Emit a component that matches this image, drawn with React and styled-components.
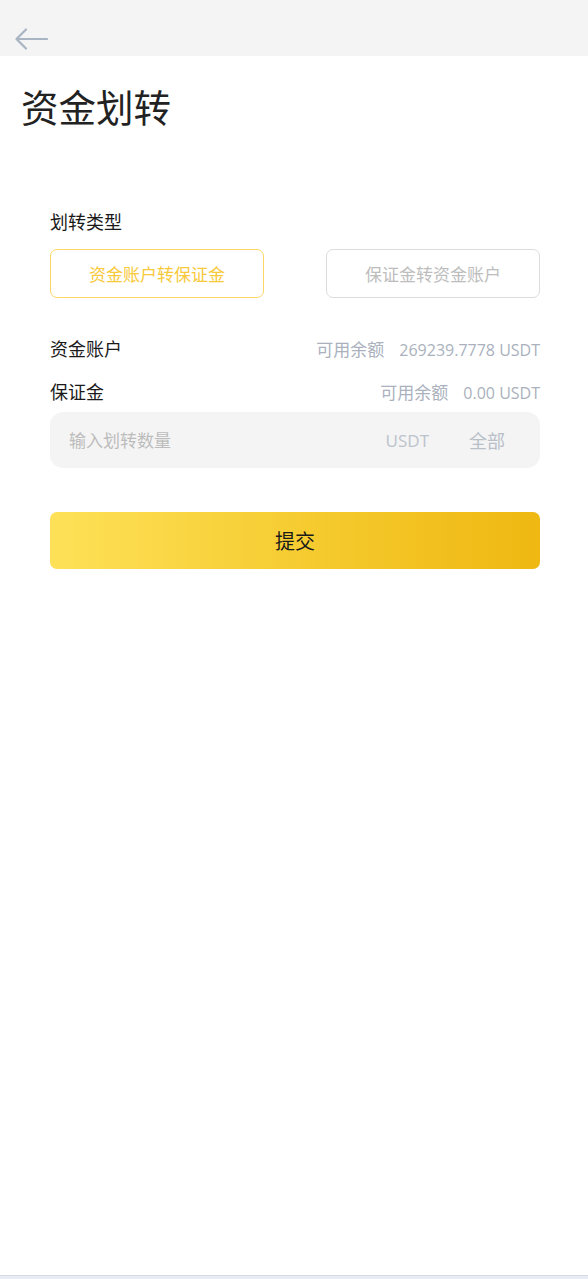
import React from "react";
import styled, { createGlobalStyle } from "styled-components";

const Global = createGlobalStyle`
  html, body { margin: 0; padding: 0; background: #fff; }
  body { font-family: "Open Sans", "Noto Sans CJK SC", "Noto Sans", sans-serif; }
  * { box-sizing: border-box; }
`;

const Page = styled.div`
  min-height: 1279px;
  display: flex;
  flex-direction: column;
  background: #fff;
`;

const TopBar = styled.div`
  height: 56px;
  background: #f4f4f4;
  display: flex;
  align-items: flex-end;
  padding: 0 0 5px 14px;
`;

const BackBtn = styled.button`
  border: 0;
  background: transparent;
  padding: 0;
  width: 36px;
  height: 24px;
  display: flex;
  align-items: center;
  cursor: pointer;
`;

const Title = styled.h1`
  margin: 28px 0 0 21px;
  font-size: 37.5px;
  font-weight: 400;
  color: #222;
  line-height: 48px;
`;

const Body = styled.div`
  flex: 1;
  padding: 78px 48px 0 50px;
  display: flex;
  flex-direction: column;
`;

const Label = styled.div`
  font-size: 18px;
  color: #1a1a1a;
  line-height: 24px;
`;

const TypeRow = styled.div`
  display: flex;
  justify-content: space-between;
  margin-top: 15px;
`;

const TypeBtn = styled.button`
  width: 214px;
  height: 49px;
  border-radius: 7px;
  background: #fff;
  border: 1px solid ${(p) => (p.$active ? "#fcd666" : "#dcdcdc")};
  color: ${(p) => (p.$active ? "#f8c93a" : "#bdbdbd")};
  font-size: 17px;
  font-family: inherit;
  cursor: pointer;
`;

const InfoRow = styled.div`
  display: flex;
  justify-content: space-between;
  align-items: center;
  height: 24px;
  margin-top: ${(p) => p.$mt}px;
`;

const InfoName = styled.span`
  font-size: 18px;
  color: #1a1a1a;
`;

const InfoVal = styled.span`
  display: flex;
  align-items: baseline;
  gap: 15px;
  color: #aab1bd;
`;

const InfoCaption = styled.span`
  font-size: 17px;
`;

const InfoAmount = styled.span`
  font-size: 16px;
`;

const InputBox = styled.div`
  margin-top: 9px;
  height: 56px;
  background: #f4f4f4;
  border-radius: 13px;
  display: flex;
  align-items: center;
  padding: 0 35px 0 17px;
`;

const Input = styled.input`
  flex: 1;
  min-width: 0;
  border: 0;
  background: transparent;
  outline: none;
  font-size: 17px;
  font-family: inherit;
  color: #333;
  &::placeholder { color: #bcbcbc; }
`;

const Unit = styled.span`
  font-size: 17px;
  color: #bcc3cc;
  margin-right: 40px;
`;

const AllBtn = styled.span`
  font-size: 18px;
  color: #b8bfc9;
`;

const Submit = styled.button`
  margin-top: 44px;
  height: 57px;
  border: 0;
  border-radius: 7px;
  background: linear-gradient(90deg, #fee158 0%, #f4c82a 60%, #efb812 100%);
  font-size: 20px;
  font-family: inherit;
  color: #1a1a1a;
  cursor: pointer;
`;

const Footer = styled.div`
  height: 4px;
  border-top: 1px solid #d6d9de;
  background: #e8edf5;
`;

export default function App() {
  return (
    <Page>
      <Global />
      <TopBar>
        <BackBtn aria-label="back">
          <svg width="34" height="24" viewBox="0 0 34 24" fill="none">
            <path d="M3 12H33M12 2.5L2.5 12L12 21.5" stroke="#aab5c3" strokeWidth="2.2" strokeLinecap="round" strokeLinejoin="round" />
          </svg>
        </BackBtn>
      </TopBar>
      <Title>资金划转</Title>
      <Body>
        <Label>划转类型</Label>
        <TypeRow>
          <TypeBtn $active>资金账户转保证金</TypeBtn>
          <TypeBtn>保证金转资金账户</TypeBtn>
        </TypeRow>
        <InfoRow $mt={38}>
          <InfoName>资金账户</InfoName>
          <InfoVal>
            <InfoCaption>可用余额</InfoCaption>
            <InfoAmount>269239.7778 USDT</InfoAmount>
          </InfoVal>
        </InfoRow>
        <InfoRow $mt={19}>
          <InfoName>保证金</InfoName>
          <InfoVal>
            <InfoCaption>可用余额</InfoCaption>
            <InfoAmount>0.00 USDT</InfoAmount>
          </InfoVal>
        </InfoRow>
        <InputBox>
          <Input placeholder="输入划转数量" />
          <Unit>USDT</Unit>
          <AllBtn>全部</AllBtn>
        </InputBox>
        <Submit>提交</Submit>
      </Body>
      <Footer />
    </Page>
  );
}
